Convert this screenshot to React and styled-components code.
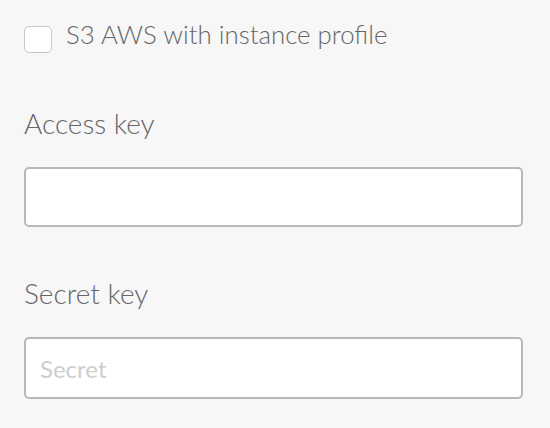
import React from "react";
import styled, { createGlobalStyle } from "styled-components";

const Global = createGlobalStyle`
  html, body { margin: 0; padding: 0; background: #f7f7f7; }
  body { font-family: Lato, "Open Sans", sans-serif; color: #666; }
`;

const Page = styled.div`
  padding: 19px 27px 0 24px;
  display: flex;
  flex-direction: column;
`;

const CheckRow = styled.label`
  display: flex;
  align-items: flex-start;
  gap: 14px;
  font-size: 25.8px;
  font-weight: 300;
  line-height: 30px;
  color: #666;
`;

const Box = styled.span`
  width: 26px;
  height: 25px;
  margin-top: 7px;
  border: 1px solid #c6c6c6;
  border-radius: 5px;
  background: #fff;
  flex: none;
`;

const Field = styled.div`
  display: flex;
  flex-direction: column;
  margin-top: ${(p) => p.$top}px;
`;

const Label = styled.div`
  font-size: 28px;
  line-height: 34px;
  color: #666;
  font-weight: 300;
`;

const Input = styled.input`
  box-sizing: border-box;
  width: 100%;
  height: ${(p) => p.$h}px;
  margin-top: 27px;
  border: 2px solid #b8b8b8;
  border-radius: 5px;
  background: #fff;
  padding: 0 14px;
  font-family: Lato, sans-serif;
  font-size: 24px;
  color: #666;
  outline: none;
  &::placeholder { color: #cdcdcd; }
`;

export default function App() {
  return (
    <>
      <Global />
      <Page>
        <CheckRow>
          <Box />
          S3 AWS with instance profile
        </CheckRow>
        <Field $top={53}>
          <Label>Access key</Label>
          <Input $h={60} />
        </Field>
        <Field $top={49}>
          <Label>Secret key</Label>
          <Input $h={62} placeholder="Secret" />
        </Field>
      </Page>
    </>
  );
}
